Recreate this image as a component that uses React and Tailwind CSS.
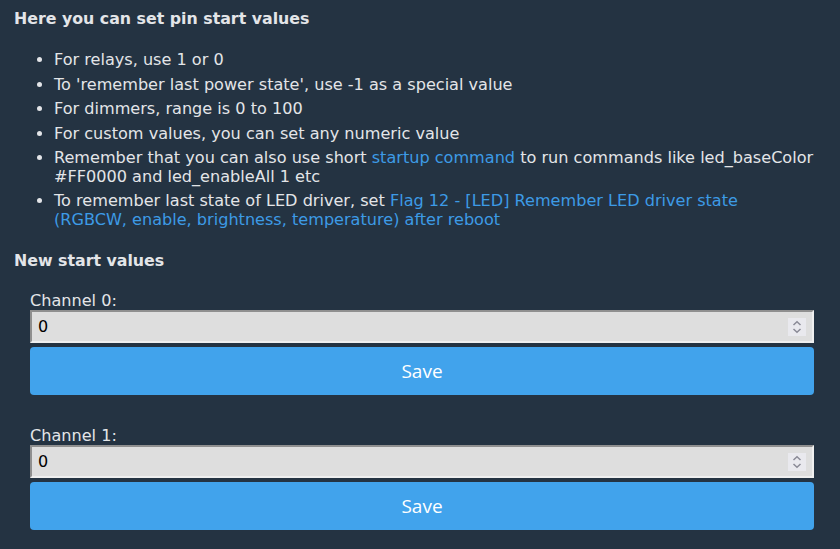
import React from "react";

function Spinner() {
  return (
    <div className="absolute right-[6px] top-1/2 -translate-y-1/2 w-[18px] h-[18px] bg-[#e9e9ee] flex items-center justify-center">
      <svg width="10" height="14" viewBox="0 0 10 14" fill="none" stroke="#8a8a96" strokeWidth="1.5">
        <path d="M1.5 5 L5 1.8 L8.5 5" />
        <path d="M1.5 9 L5 12.2 L8.5 9" />
      </svg>
    </div>
  );
}

function Channel({ n, top }) {
  return (
    <div className={top}>
      <div className="text-[16.1px] leading-[19px] text-[#e3e5e8]">Channel {n}:</div>
      <div className="relative h-[33px] bg-[#dedede] border-2 border-t-[#8f8f8f] border-l-[#8f8f8f] border-r-[#efefef] border-b-[#efefef]">
        <div className="pl-[6px] text-[16px] leading-[29px] text-black">0</div>
        <Spinner />
      </div>
      <button className="mt-[4px] w-full h-[48px] rounded-[4px] bg-[#41a3ec] text-white text-[19px]" style={{ fontFamily: '"Open Sans", "Noto Sans", sans-serif' }}>
        Save
      </button>
    </div>
  );
}

export default function App() {
  const link = "text-[#3d9be6]";
  return (
    <div
      className="w-[840px] h-[549px] bg-[#243342] text-[#e3e5e8] pl-[14px] pr-[26px] overflow-hidden"
      style={{ fontFamily: '"DejaVu Sans", sans-serif' }}
    >
      <div className="pt-[9px] font-bold text-[15.8px] leading-[19px]">Here you can set pin start values</div>
      <ul className="mt-[23px] pl-[40px] list-disc text-[16.1px] leading-[18.5px] whitespace-nowrap">
        <li className="mb-[6px]">For relays, use 1 or 0</li>
        <li className="mb-[6px]">To 'remember last power state', use -1 as a special value</li>
        <li className="mb-[6px]">For dimmers, range is 0 to 100</li>
        <li className="mb-[6px]">For custom values, you can set any numeric value</li>
        <li className="mb-[6px]">
          Remember that you can also use short <span className={link}>startup command</span> to run commands like led_baseColor
          <br />#FF0000 and led_enableAll 1 etc
        </li>
        <li>
          To remember last state of LED driver, set <span className={link}>Flag 12 - [LED] Remember LED driver state</span>
          <br />
          <span className={link}>(RGBCW, enable, brightness, temperature) after reboot</span>
        </li>
      </ul>
      <div className="mt-[22px] font-bold text-[15.8px] leading-[19px]">New start values</div>
      <div className="pl-[16px]">
        <Channel n={0} top="mt-[21px]" />
        <Channel n={1} top="mt-[31px]" />
      </div>
    </div>
  );
}
